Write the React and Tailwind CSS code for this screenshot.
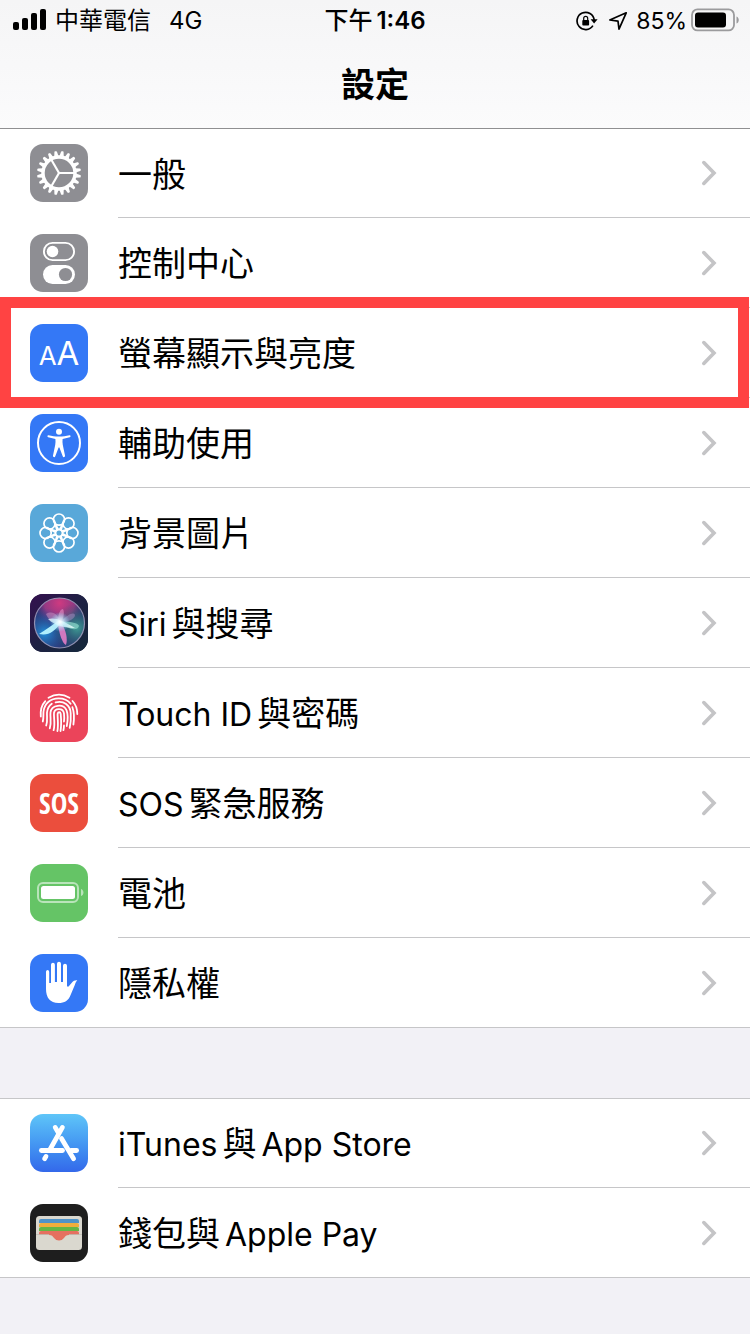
import React from 'react';

const gearTeeth = Array.from({ length: 20 }, (_, i) => i * 18 + 9);
const petals = [0, 45, 90, 135, 180, 225, 270, 315];

const GearIcon = () => (
    <svg viewBox="0 0 58 58" className="w-full h-full">
        {gearTeeth.map((deg) => (
            <path
                key={deg}
                d="M26.7 13 L27.7 7.8 Q27.8 7 28.5 7 H29.5 Q30.2 7 30.3 7.8 L31.3 13 Z"
                fill="#fff"
                transform={`rotate(${deg} 29 29)`}
            />
        ))}
        <circle cx="29" cy="29" r="16" fill="none" stroke="#fff" strokeWidth="3.4" />
        <g stroke="#fff" strokeWidth="2.2">
            <path d="M29 29 H44" />
            <path d="M29 29 L21.5 16" />
            <path d="M29 29 L21.5 42" />
        </g>
    </svg>
);

const ControlIcon = () => (
    <svg viewBox="0 0 58 58" className="w-full h-full">
        <rect x="13.9" y="8.9" width="30.2" height="17.2" rx="8.6" fill="none" stroke="#fff" strokeWidth="1.9" />
        <circle cx="22.5" cy="17.5" r="5.8" fill="#fff" />
        <rect x="13" y="31" width="32" height="19" rx="9.5" fill="#fff" />
        <circle cx="35.5" cy="40.5" r="6.6" fill="#8e8e93" />
    </svg>
);

const DisplayIcon = () => (
    <span className="flex h-full items-baseline justify-center pt-[13px] text-white leading-none">
        <span className="text-[26px]">A</span>
        <span className="text-[33px]">A</span>
    </span>
);

const AccessibilityIcon = () => (
    <svg viewBox="0 0 58 58" className="w-full h-full">
        <circle cx="29" cy="29" r="21" fill="none" stroke="#fff" strokeWidth="2" />
        <circle cx="29" cy="17.8" r="3" fill="#fff" />
        <path
            d="M18.5 21.2 C22 22 25 22.6 29 22.6 S36 22 39.5 21.2 C40.8 21 41 22.9 39.8 23.2 L32.6 25 C32.4 27 32.4 29 32.8 31 L35 41.6 C35.2 43.2 33.3 43.8 32.7 42.3 L29.4 33.4 H28.6 L25.3 42.3 C24.7 43.8 22.8 43.2 23 41.6 L25.2 31 C25.6 29 25.6 27 25.4 25 L18.2 23.2 C17 22.9 17.2 21 18.5 21.2 Z"
            fill="#fff"
        />
    </svg>
);

const WallpaperIcon = () => (
    <svg viewBox="0 0 58 58" className="w-full h-full" fill="none" stroke="#fff" strokeWidth="1.7">
        {petals.map((deg) => (
            <g key={deg} transform={`rotate(${deg} 29 29)`}>
                <circle cx="29" cy="15.6" r="5.6" />
                <path d="M24.4 18.4 L28.6 25.8 M33.6 18.4 L29.4 25.8" />
            </g>
        ))}
        <circle cx="29" cy="29" r="3.4" />
    </svg>
);

const SiriIcon = () => (
    <svg viewBox="0 0 58 58" className="w-full h-full">
        <defs>
            <linearGradient id="siriBg" x1="0" y1="0" x2="1" y2="1">
                <stop offset="0" stopColor="#35104f" />
                <stop offset="0.5" stopColor="#1e2143" />
                <stop offset="1" stopColor="#14283a" />
            </linearGradient>
            <radialGradient id="siriPink" cx="0.5" cy="0.1" r="0.5">
                <stop offset="0" stopColor="#cf3a80" />
                <stop offset="0.6" stopColor="#b53a88" stopOpacity="0.75" />
                <stop offset="1" stopColor="#6a2a85" stopOpacity="0" />
            </radialGradient>
            <radialGradient id="siriBlue" cx="0.2" cy="0.7" r="0.5">
                <stop offset="0" stopColor="#2390d8" />
                <stop offset="1" stopColor="#1b4fa0" stopOpacity="0" />
            </radialGradient>
            <radialGradient id="siriTeal" cx="0.85" cy="0.6" r="0.5">
                <stop offset="0" stopColor="#3f9c94" />
                <stop offset="1" stopColor="#1b5566" stopOpacity="0" />
            </radialGradient>
            <radialGradient id="siriGlow">
                <stop offset="0" stopColor="#fff" />
                <stop offset="0.35" stopColor="#d8f6ff" stopOpacity="0.75" />
                <stop offset="1" stopColor="#7fdcff" stopOpacity="0" />
            </radialGradient>
        </defs>
        <rect width="58" height="58" fill="url(#siriBg)" />
        <circle cx="29.5" cy="29" r="25" fill="#2f3672" />
        <circle cx="29.5" cy="29" r="25" fill="url(#siriPink)" />
        <circle cx="29.5" cy="29" r="25" fill="url(#siriBlue)" />
        <circle cx="29.5" cy="29" r="25" fill="url(#siriTeal)" />
        <path d="M16 20 C23 16 29 21 30 29 C24 29 18 26 16 20 Z" fill="#c98cc0" opacity="0.55" />
        <path d="M30 29 C38 19 44 18 45 21 C45 25 38 28 30 29 Z" fill="#a78fc4" opacity="0.5" />
        <path d="M30 28 C40 27 48 29 49 32 C47 38 37 35 30 28 Z" fill="#8fd8cb" opacity="0.7" />
        <path d="M28 28 C28 20 30 15 33 15 C35 19 33 25 31 29 Z" fill="#e58fc4" opacity="0.6" />
        <path d="M31 28 C36 36 38 45 36 51 C32 49 29 39 28 30 Z" fill="#e27cc6" opacity="0.9" />
        <path d="M31 28 C25 38 18 42 9 40 C16 36 22 31 28 27 Z" fill="#b8f4ff" opacity="0.95" />
        <path d="M18 25 C25 23 32 26 45 34 C36 34 25 32 18 25 Z" fill="#eaffff" opacity="0.75" />
        <circle cx="30" cy="28" r="10" fill="url(#siriGlow)" />
        <circle cx="29.5" cy="29" r="25" fill="none" stroke="#aaa5c4" strokeWidth="1.2" opacity="0.8" />
    </svg>
);

const TouchIcon = () => (
    <svg viewBox="0 0 58 58" className="w-full h-full" fill="none" stroke="#fff" strokeWidth="1.8" strokeLinecap="round">
        <path d="M18.5 13.8 C25 9.8 33 9.8 39.5 13.8" />
        <path d="M42.5 17 C45.8 20.5 47.3 25 47.3 30" />
        <path d="M15.3 17.2 C11.3 21.5 10.3 27 10.8 32.5" />
        <path d="M12.8 37.5 C13.8 33.5 13.2 31 13.5 27.5 C14.5 19 21 14.4 28.5 14.4 C34 14.4 38 16.3 40.6 19.8" />
        <path d="M42.4 23.2 C44.4 28.5 44.2 35 43.4 40.5" />
        <path d="M16.2 41.5 C17.8 37 16.8 33 17 28.5 C17.4 24.5 19 21.8 21.8 19.8" />
        <path d="M25.6 18.4 C33.5 16.2 40.6 21 40.7 29.5 C41 34.5 40.8 39.5 39.7 43.8" />
        <path d="M19.8 44.3 C21.7 38.5 20 33.5 20.5 28.5 C21.5 20.4 33.5 19.4 36.6 26.4 C38.2 31 37.8 37 36.8 42" />
        <path d="M23.6 46.2 C25.4 40 23.6 34 24 29 C24.8 23.8 33.2 23.8 34 29.5 C34.3 32.5 34.3 35 34 37.5" />
        <path d="M27.4 47 C28.6 41 27.5 34.5 27.6 29.8 C28 27.7 30.4 27.7 30.7 29.8 C31.3 36 31.5 41.5 30.5 47" />
        <path d="M34 41.5 C34 43 33.8 44.8 33.4 46.2" />
    </svg>
);

const SosIcon = () => (
    <span className="flex h-full items-center justify-center text-[28px] font-bold leading-none text-white font-['Liberation_Sans_Narrow','Open_Sans_Condensed','Noto_Sans',sans-serif]">
        SOS
    </span>
);

const BatteryRowIcon = () => (
    <svg viewBox="0 0 58 58" className="w-full h-full">
        <rect x="8" y="19" width="40" height="19" rx="5" fill="none" stroke="#fff" strokeOpacity="0.55" strokeWidth="2" />
        <rect x="11" y="22" width="34" height="13" rx="2.5" fill="#fff" />
        <path d="M51 25 C54.3 26 54.3 31 51 32 Z" fill="#fff" fillOpacity="0.55" />
    </svg>
);

const HandIcon = () => (
    <svg viewBox="0 0 58 58" className="w-full h-full">
        <path
            d="M16 18 C16 15.2 19.2 15.2 19.2 18 V29 H21 V11 C21 8 24.9 8 24.9 11 V28 H27 V10 C27 7 31 7 31 10 V28 H33 V12 C33 9 37 9 37 12 V32 C37.4 33 38.6 32.8 39 32 L42 28.4 C43.3 26.6 45 26 47.3 26.2 C46 27.4 45.6 28.8 44.8 31 L40.6 41 C38.4 46.8 34.5 49 28.5 49 C20 49 16 43.5 16 35 Z"
            fill="#fff"
        />
    </svg>
);

const StoreIcon = () => (
    <svg viewBox="0 0 58 58" className="w-full h-full" fill="none" stroke="#fff" strokeWidth="4.8" strokeLinecap="round">
        <path d="M11.4 36.5 H32.5" />
        <path d="M41 36.5 H46.6" />
        <path d="M32.4 13.4 L20 35.5" />
        <path d="M25.2 13.4 L28.8 19.5" />
        <path d="M31.5 24.5 L43.6 44.8" />
        <path d="M16 42.4 L14.6 44.8" />
    </svg>
);

const WalletIcon = () => (
    <svg viewBox="0 0 58 58" className="w-full h-full">
        <rect x="6" y="12" width="46" height="34" rx="3.5" fill="#dad8cf" />
        <path d="M9 19 V17 Q9 15 11 15 H47 Q49 15 49 17 V19 Z" fill="#4f93c8" />
        <path d="M9 23 V21 Q9 19 11 19 H47 Q49 19 49 21 V23 Z" fill="#f0ad3d" />
        <path d="M9 27 V25 Q9 23 11 23 H47 Q49 23 49 25 V27 Z" fill="#65b545" />
        <path
            d="M9 31 V29 Q9 27 11 27 H47 Q49 27 49 29 V31 H39 C36 31 35.5 32 34 34 Q32 36.5 29 36.5 Q26 36.5 24 34 C22.5 32 22 31 19 31 Z"
            fill="#e57060"
        />
        <path d="M6 30.5 H19 M39 30.5 H52" stroke="#bfbdb5" strokeWidth="0.8" />
    </svg>
);

const mainItems = [
    { label: ['一般'], Icon: GearIcon, color: 'bg-[#8e8e93]' },
    { label: ['控制中心'], Icon: ControlIcon, color: 'bg-[#8e8e93]' },
    { label: ['螢幕顯示與亮度'], Icon: DisplayIcon, color: 'bg-[#3478f6]', highlighted: true },
    { label: ['輔助使用'], Icon: AccessibilityIcon, color: 'bg-[#3478f6]' },
    { label: ['背景圖片'], Icon: WallpaperIcon, color: 'bg-[#59a8d9]' },
    { label: ['Siri', '與搜尋'], Icon: SiriIcon, color: 'bg-[#1e2143]' },
    { label: ['Touch ID', '與密碼'], Icon: TouchIcon, color: 'bg-[#eb445a]' },
    { label: ['SOS', '緊急服務'], Icon: SosIcon, color: 'bg-[#eb4e3d]' },
    { label: ['電池'], Icon: BatteryRowIcon, color: 'bg-[#65c466]' },
    { label: ['隱私權'], Icon: HandIcon, color: 'bg-[#3478f6]' },
];

const storeItems = [
    { label: ['iTunes', '與', 'App Store'], Icon: StoreIcon, color: 'bg-linear-to-b from-[#5fc5f8] to-[#3468ea]' },
    { label: ['錢包與', 'Apple Pay'], Icon: WalletIcon, color: 'bg-[#1e1e1e]' },
];

const isLatin = (text) => /^[A-Za-z]/.test(text);

const Chevron = () => (
    <svg viewBox="0 0 16 26" className="w-4 h-[26px] shrink-0" fill="none" stroke="#c4c4c6" strokeWidth="3.6">
        <path d="M2.8 2.6 L13 13 L2.8 23.4" strokeLinecap="round" strokeLinejoin="miter" />
    </svg>
);

const SettingRow = ({ item }) => {
    const { label, Icon, color, highlighted } = item;
    return (
        <li className="group relative flex pl-[30px]">
            <div className="py-4 pr-[30px] group-first:pt-[15px] group-last:pb-[15px]">
                <div className={`w-[58px] h-[58px] rounded-[13px] overflow-hidden ${color}`}>
                    <Icon />
                </div>
            </div>
            <a
                href="#"
                className="flex flex-1 items-center justify-between border-b border-[#c6c6c8] pr-[33px] group-last:border-b-0"
            >
                <span className="flex items-baseline gap-[5px] whitespace-nowrap pt-[3px] text-[34px] leading-[50px]">
                    {label.map((part) => (
                        <span key={part} className={isLatin(part) ? 'text-[32px]' : ''}>
                            {part}
                        </span>
                    ))}
                </span>
                <Chevron />
            </a>
            {highlighted && (
                <div className="pointer-events-none absolute left-0 right-px -top-[11px] -bottom-2.5 z-10 border-[11px] border-[#ff4343]" />
            )}
        </li>
    );
};

const SettingGroup = ({ items, edge }) => (
    <ul className={`bg-white border-y border-b-[#c6c6c8] ${edge}`}>
        {items.map((item) => (
            <SettingRow key={item.label.join('')} item={item} />
        ))}
    </ul>
);

const StatusBar = () => (
    <div className="grid h-[42px] grid-cols-[1fr_auto_1fr] items-center text-[24px] leading-[42px]">
        <div className="flex items-center pl-[13px]">
            <svg viewBox="0 0 34 24" className="mr-2 w-[34px] h-6">
                <rect x="0" y="13" width="6" height="8" rx="2" />
                <rect x="9" y="9" width="6" height="12" rx="2" />
                <rect x="18" y="4" width="6" height="17" rx="2" />
                <rect x="27" y="0" width="6" height="21" rx="2" />
            </svg>
            <span>中華電信</span>
            <span className="ml-[18px]">4G</span>
        </div>
        <div className="flex items-baseline gap-1 font-semibold">
            <span className="font-medium">下午</span>
            <span>1:46</span>
        </div>
        <div className="flex items-center justify-end pr-[11px]">
            <svg viewBox="0 0 22 20" className="mr-2.5 w-[22px] h-5" fill="none">
                <path d="M16.9 14.6 A8.6 8.6 0 1 1 18.2 9" stroke="#000" strokeWidth="1.7" />
                <path d="M14.6 8.2 H21.6 L18.1 12.4 Z" fill="#000" />
                <rect x="6.3" y="9" width="6.8" height="5.4" rx="0.9" fill="#000" />
                <path d="M7.7 9.4 V7.4 A2 2 0 0 1 11.7 7.4 V9.4" stroke="#000" strokeWidth="1.2" />
            </svg>
            <svg viewBox="0 0 20 20" className="mr-2 w-5 h-5" fill="none">
                <path
                    d="M18.2 1.8 L1.8 9 L10 10.1 L11 18.2 Z"
                    stroke="#000"
                    strokeWidth="1.7"
                    strokeLinejoin="round"
                />
            </svg>
            <span className="text-[23px]">85%</span>
            <svg viewBox="0 0 48 26" className="ml-1 w-12 h-[26px]" fill="none">
                <rect x="1" y="1.4" width="42" height="21" rx="5.5" stroke="#9b9b9d" strokeWidth="1.8" />
                <rect x="4" y="4.4" width="31" height="15" rx="3" fill="#000" />
                <path d="M45.5 8.5 C48.5 9.5 48.5 14.5 45.5 15.5 Z" fill="#9b9b9d" />
            </svg>
        </div>
    </div>
);

const App = () => {
    return (
        <div className="min-h-screen bg-[#f2f1f6] text-black font-['Inter','Noto_Sans_CJK_TC',sans-serif]">
            <header className="h-32 bg-linear-to-b from-[#f5f5f6] to-[#fbfbfc]">
                <StatusBar />
                <h1 className="text-center text-[34px] font-bold leading-[86px]">設定</h1>
            </header>
            <main className="flex flex-col gap-[70px]">
                <SettingGroup items={mainItems} edge="border-t-[#8f8f91]" />
                <SettingGroup items={storeItems} edge="border-t-[#c6c6c8]" />
            </main>
        </div>
    );
};

export default App;
